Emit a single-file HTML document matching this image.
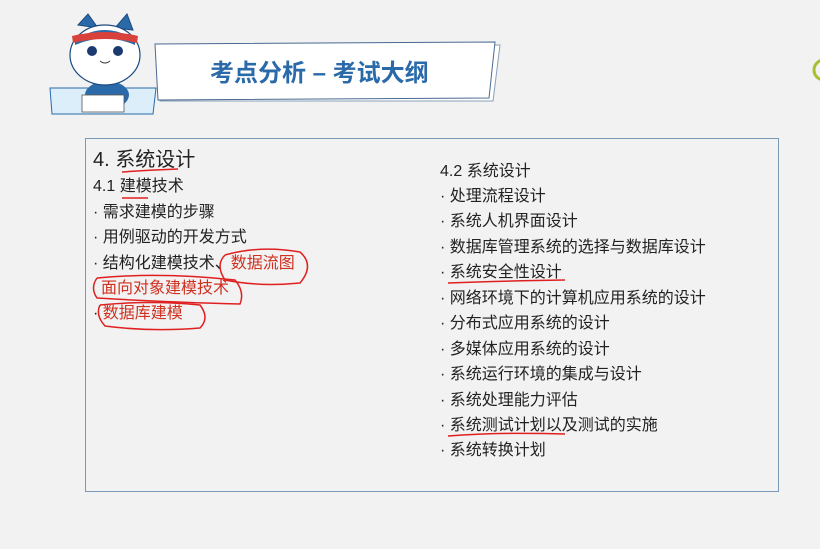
<!DOCTYPE html>
<html><head><meta charset="utf-8"><style>
body{margin:0;width:820px;height:549px;background:#f2f2f2;font-family:"Liberation Sans","Noto Sans CJK SC",sans-serif;position:relative;overflow:hidden;color:#222}
.t{position:absolute;font-size:16px;white-space:nowrap;line-height:18px}
.box{position:absolute;left:85px;top:138px;width:692px;height:352px;border:1.5px solid #7a98b8}
</style></head><body>
<svg width="820" height="140" style="position:absolute;left:0;top:0">
 <polygon points="160,45 500,45 493,101 160,101" fill="#fff" stroke="#8aa0b8" stroke-width="1"/>
 <polygon points="155,44 495,42 489,98 158,100" fill="#fff" stroke="#4a6a90" stroke-width="1"/>
 <text x="210" y="81" font-size="24" font-weight="bold" fill="#2a6aa8" font-family="Liberation Sans,Noto Sans CJK SC,sans-serif">考点分析 – 考试大纲</text>
 <polygon points="50,88 156,88 153,114 52,114" fill="#dceefa" stroke="#2a6aa8"/>
 <ellipse cx="107" cy="95" rx="22" ry="14" fill="#2a6aa8"/>
 <rect x="82" y="95" width="42" height="17" fill="#fff" stroke="#555" stroke-width="0.8"/>
 <polygon points="78,25 88,14 98,28" fill="#2a6aa8" stroke="#1a4a80"/>
 <polygon points="115,28 127,14 133,30" fill="#2a6aa8" stroke="#1a4a80"/>
 <ellipse cx="105" cy="55" rx="35" ry="30" fill="#fff" stroke="#1a4a80" stroke-width="1.2"/>
 <path d="M75,40 Q105,20 135,40 L135,45 Q105,32 75,45Z" fill="#2a6aa8"/>
 <path d="M72,36 Q105,28 138,36 L137,43 Q105,35 73,43Z" fill="#d9423a"/>
 <circle cx="92" cy="51" r="5" fill="#1a3a70"/><circle cx="118" cy="51" r="5" fill="#1a3a70"/>
 <path d="M100,61 Q105,65 110,61" stroke="#333" fill="none"/>
 <circle cx="824" cy="70" r="10" fill="none" stroke="#a8c030" stroke-width="3"/>
</svg>
<div class="box"></div>
<div class="t" style="left:93px;top:149px;font-size:20px;line-height:22px">4. 系统设计</div>
<div class="t" style="left:93px;top:178px">4.1 建模技术</div>
<div class="t" style="left:93px;top:204px">· 需求建模的步骤</div>
<div class="t" style="left:93px;top:229px">· 用例驱动的开发方式</div>
<div class="t" style="left:93px;top:255px">· 结构化建模技术、<span style="color:#d03020">数据流图</span></div>
<div class="t" style="left:101px;top:280px;color:#d03020">面向对象建模技术</div>
<div class="t" style="left:93px;top:305px">· <span style="color:#d03020">数据库建模</span></div>
<svg width="820" height="549" style="position:absolute;left:0;top:0" fill="none" stroke="#e02020" stroke-width="1.5">
 <path d="M122,172 Q150,170 178,169"/>
 <path d="M122,198 L148,198"/>
 <path d="M225,255 Q260,245 300,252 Q315,265 300,283 Q260,287 225,280 Q215,265 225,255"/>
 <path d="M97,278 Q160,272 235,280 Q245,292 240,304 Q160,302 97,298 Q90,288 97,278"/>
 <path d="M100,305 Q150,300 200,305 Q210,318 200,328 Q150,332 105,326 Q95,315 100,305"/>
 <path d="M448,283 Q500,281 565,280"/>
 <path d="M448,436 Q500,432 565,434"/>
</svg>
<div class="t" style="left:440px;top:163px">4.2 系统设计</div>
<div class="t" style="left:440px;top:188px">· 处理流程设计</div>
<div class="t" style="left:440px;top:213px">· 系统人机界面设计</div>
<div class="t" style="left:440px;top:239px">· 数据库管理系统的选择与数据库设计</div>
<div class="t" style="left:440px;top:264px">· 系统安全性设计</div>
<div class="t" style="left:440px;top:290px">· 网络环境下的计算机应用系统的设计</div>
<div class="t" style="left:440px;top:315px">· 分布式应用系统的设计</div>
<div class="t" style="left:440px;top:341px">· 多媒体应用系统的设计</div>
<div class="t" style="left:440px;top:366px">· 系统运行环境的集成与设计</div>
<div class="t" style="left:440px;top:392px">· 系统处理能力评估</div>
<div class="t" style="left:440px;top:417px">· 系统测试计划以及测试的实施</div>
<div class="t" style="left:440px;top:442px">· 系统转换计划</div>
</body></html>
